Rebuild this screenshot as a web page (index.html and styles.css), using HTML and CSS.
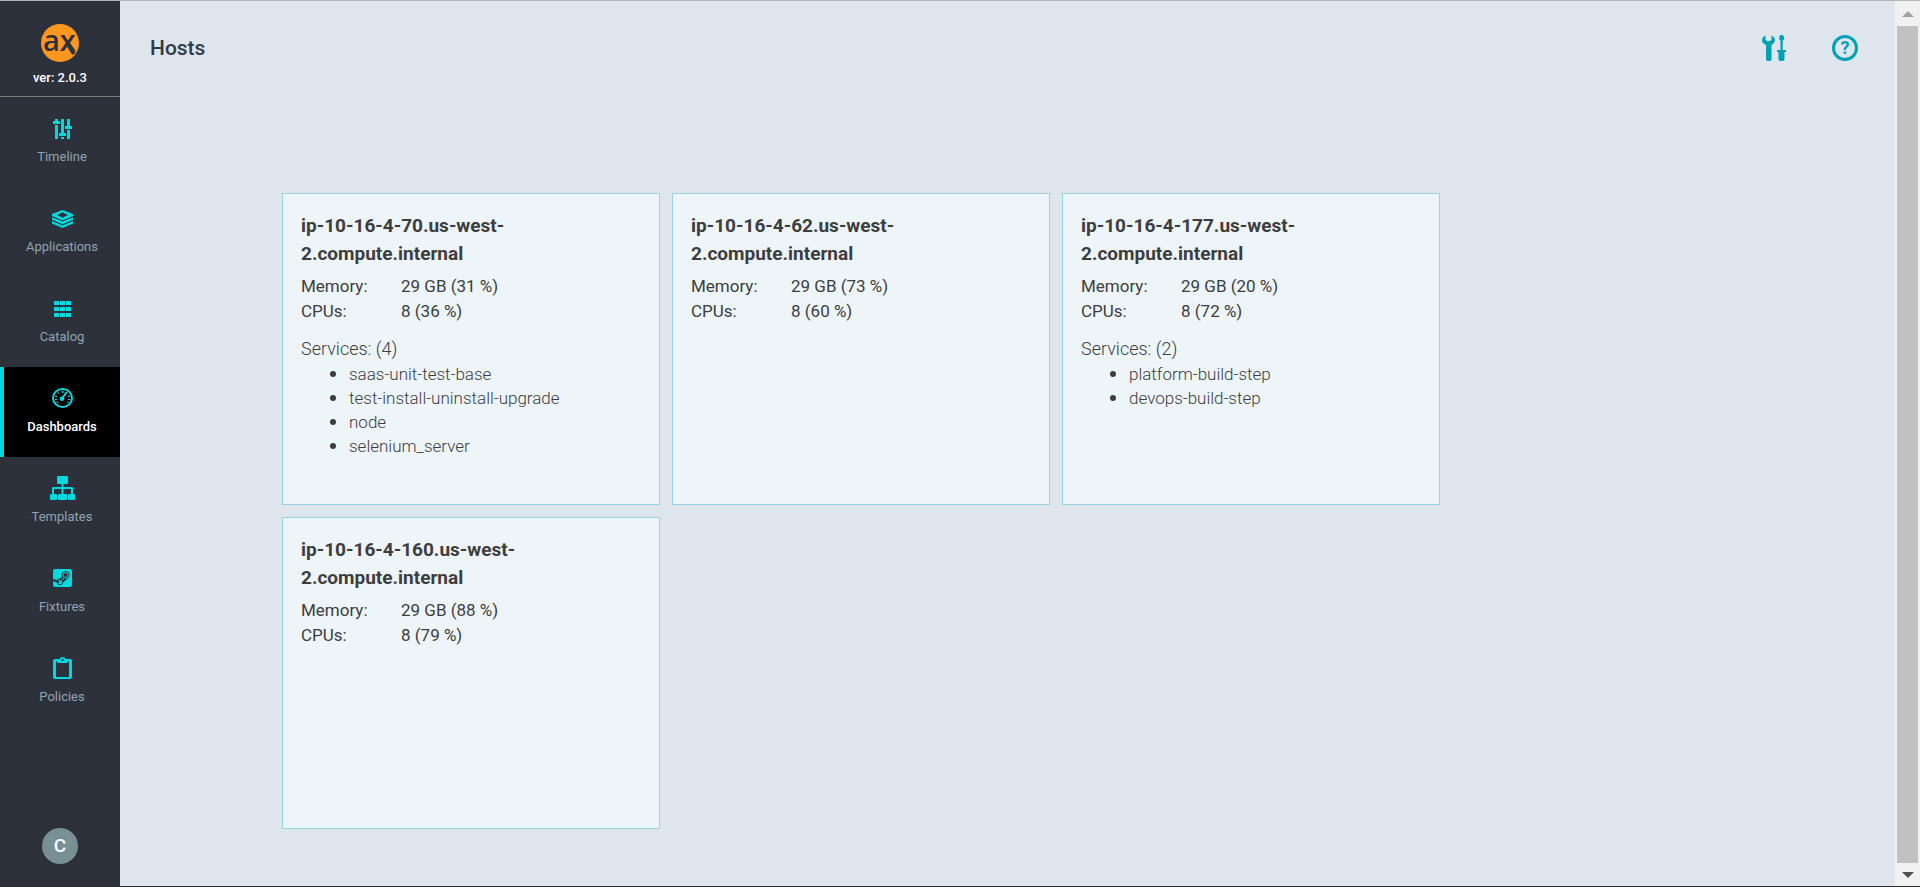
FILE: index.html
```html
<!DOCTYPE html>
<html lang="en">
<head>
<meta charset="utf-8">
<title>Hosts</title>
<link rel="stylesheet" href="styles.css">
</head>
<body>
<div class="app">
  <aside class="sidebar">
    <div class="brand">
      <svg class="logo" width="38" height="38" viewBox="0 0 38 38" role="img" aria-label="ax">
        <circle cx="19" cy="19" r="19" fill="#fd971f"/>
        <text class="logo-text" x="2" y="27">ax</text>
        <path d="M26 19L33 30" stroke="#2d313b" stroke-width="4"/>
      </svg>
      <span class="version">ver: 2.0.3</span>
    </div>
    <nav class="nav">
      <a class="nav-item" href="#timeline">
        <span class="nav-icon"><svg width="19" height="20" viewBox="0 0 19 20" fill="currentColor"><path d="M2 0h3v2h2v3H0V2h2zM2 6h3v14H2zM8 0h3v14h2v3H6v-3h2zM8 18h3v2H8zM14 0h3v7h2v3h-7V7h2zM14 11h3v9h-3z"/></svg></span>
        <span>Timeline</span>
      </a>
      <a class="nav-item" href="#applications">
        <span class="nav-icon"><svg width="21" height="18" viewBox="0 0 21 18" fill="currentColor"><path fill-rule="evenodd" d="M10.500 0L21 4V6L10.500 10.500L0 6V4zM10.500 2.200L5 5L10.500 7.800L16 5z"/><path d="M0 7.200L10.500 11.600L21 7.200V9.800L10.500 14.300L0 9.800zM0 11L10.500 15.400L21 11V13.500L10.500 18L0 13.500z"/></svg></span>
        <span>Applications</span>
      </a>
      <a class="nav-item" href="#catalog">
        <span class="nav-icon"><svg width="17" height="16" viewBox="0 0 17 16" fill="currentColor"><path d="M0 0h5v4H0zM6 0h5v4H6zM12 0h5v4h-5zM0 6h5v4H0zM6 6h5v4H6zM12 6h5v4h-5zM0 12h5v4H0zM6 12h5v4H6zM12 12h5v4h-5z"/></svg></span>
        <span>Catalog</span>
      </a>
      <a class="nav-item active" href="#dashboards" aria-current="page">
        <span class="nav-icon"><svg width="21" height="22" viewBox="0 0 21 22" fill="none" stroke="currentColor"><ellipse cx="10.500" cy="10" rx="9.500" ry="9" stroke-width="2"/><path d="M10.500 3v2M5.500 4.500l1 1.200M3 8l2 .6M3 11.500h2M4.500 14.500l1.500-.8M16.500 14.500l-1.500-.8M18 11.500h-2M18 8l-2 .6" stroke-width="1.200"/><circle cx="10" cy="10.800" r="2.300" fill="currentColor" stroke="none"/><path d="M10 10.500L14.800 4" stroke-width="2"/></svg></span>
        <span>Dashboards</span>
      </a>
      <a class="nav-item" href="#templates">
        <span class="nav-icon"><svg width="25" height="26" viewBox="0 0 25 26" fill="currentColor"><rect x="7" width="11" height="8" rx="1"/><rect y="18" width="7" height="6" rx="1"/><rect x="8" y="18" width="9" height="6" rx="1"/><rect x="18" y="18" width="7" height="6" rx="1"/><path d="M11.500 7h2v4H22q1 0 1 1v6h-2v-5h-7.500v5h-2v-5H4v5H2v-6q0-1 1-1h8.500z"/></svg></span>
        <span>Templates</span>
      </a>
      <a class="nav-item" href="#fixtures">
        <span class="nav-icon"><svg width="19" height="20" viewBox="0 0 19 20"><rect width="19" height="18" rx="2" fill="currentColor"/><g fill="none" stroke="#2d313b"><circle cx="12.500" cy="6" r="3.500" stroke-width="1"/><circle cx="12.500" cy="6" r="1.200" fill="#2d313b" stroke-width="1.500"/><path d="M0 11L6 13M9.500 8L7 11.500M13 9.500L9.500 12.500" stroke-width="2"/><circle cx="7" cy="12.800" r="2.900" stroke-width="1"/></g></svg></span>
        <span>Fixtures</span>
      </a>
      <a class="nav-item" href="#policies">
        <span class="nav-icon"><svg width="19" height="24" viewBox="0 0 19 24" fill="currentColor"><path fill-rule="evenodd" d="M2 2h4.500Q7 0 9.500 0T12.500 2H17q2 0 2 2v16q0 2-2 2H2q-2 0-2-2V4q0-2 2-2zM3 4.500V20h13V4.500h-1.500V6h-10V4.500zM9.500 2a1 1 0 1 0 .01 0z"/></svg></span>
        <span>Policies</span>
      </a>
    </nav>
    <button class="avatar" type="button">C</button>
  </aside>

  <main class="main">
    <header class="topbar">
      <h1 class="page-title">Hosts</h1>
      <div class="actions">
        <button class="icon-button" type="button" aria-label="Settings">
          <svg width="24" height="26" viewBox="0 0 24 26" fill="currentColor"><path d="M3.500 0.500V4.500L5 6H8L9.500 4.500V0.500Q13 2 13 5.500Q12.500 8.500 9.500 10V24Q9.500 26 6.700 26T4 24V10Q.5 8.500 0 5.500Q0 2 3.500 .5z"/><path d="M18.500 0h2.200l1.300 2v2.500l-1.300 1V15H24v2h-1.500v7q0 2-3 2t-3-2v-7H15v-2h3.500V5.500l-1.300-1V2z"/></svg>
        </button>
        <button class="icon-button help" type="button" aria-label="Help">?</button>
      </div>
    </header>
    <section class="hosts">
      <article class="card">
        <h2 class="card-title">ip-10-16-4-70.us-west-2.compute.internal</h2>
        <dl class="stats"><dt>Memory:</dt><dd>29 GB (31 %)</dd><dt>CPUs:</dt><dd>8 (36 %)</dd></dl>
        <p class="services-title">Services: (4)</p>
        <ul class="services"><li>saas-unit-test-base</li><li>test-install-uninstall-upgrade</li><li>node</li><li>selenium_server</li></ul>
      </article>
      <article class="card">
        <h2 class="card-title">ip-10-16-4-62.us-west-2.compute.internal</h2>
        <dl class="stats"><dt>Memory:</dt><dd>29 GB (73 %)</dd><dt>CPUs:</dt><dd>8 (60 %)</dd></dl>
      </article>
      <article class="card">
        <h2 class="card-title">ip-10-16-4-177.us-west-2.compute.internal</h2>
        <dl class="stats"><dt>Memory:</dt><dd>29 GB (20 %)</dd><dt>CPUs:</dt><dd>8 (72 %)</dd></dl>
        <p class="services-title">Services: (2)</p>
        <ul class="services"><li>platform-build-step</li><li>devops-build-step</li></ul>
      </article>
      <article class="card">
        <h2 class="card-title">ip-10-16-4-160.us-west-2.compute.internal</h2>
        <dl class="stats"><dt>Memory:</dt><dd>29 GB (88 %)</dd><dt>CPUs:</dt><dd>8 (79 %)</dd></dl>
      </article>
    </section>
  </main>

  <div class="scrollbar" aria-hidden="true">
    <svg class="arrow up" width="12" height="6" viewBox="0 0 12 6"><path d="M0 6L6 0L12 6z" fill="#a3a3a3"/></svg>
    <div class="thumb"></div>
    <svg class="arrow" width="12" height="6" viewBox="0 0 12 6"><path d="M0 0L6 6L12 0z" fill="#505050"/></svg>
  </div>
</div>
</body>
</html>
```
FILE: styles.css
```css
* {
  box-sizing: border-box;
}

body {
  margin: 0;
  font-family: Roboto, "Liberation Sans", sans-serif;
  color: #3d3d3d;
  background: #dee5ec;
}

h1, h2, p, dl, dd, ul {
  margin: 0;
}

button {
  padding: 0;
  border: 0;
  background: none;
  font-family: inherit;
  cursor: pointer;
}

.app {
  display: flex;
  min-height: 100vh;
  border-top: 1px solid #b3b3b8;
  border-bottom: 1px solid #2b2b2e;
}

.sidebar {
  display: flex;
  flex-direction: column;
  flex: none;
  width: 120px;
  background: #2d313b;
}

.brand {
  display: flex;
  flex-direction: column;
  align-items: center;
  gap: 8px;
  padding: 23px 0 10px;
  border-bottom: 1px solid #7a7b7b;
}

.logo {
  overflow: visible;
}

.logo-text {
  font-family: "Open Sans", sans-serif;
  font-size: 29px;
  font-weight: 600;
  fill: #2d313b;
}

.version {
  font-size: 13px;
  font-weight: 500;
  line-height: 16px;
  color: #fff;
}

.nav-item {
  display: flex;
  flex-direction: column;
  align-items: center;
  gap: 8px;
  height: 90px;
  padding-top: 20px;
  border-left: 4px solid transparent;
  font-size: 13px;
  line-height: 16px;
  color: #8fa4b1;
  text-decoration: none;
}

.nav-icon {
  display: flex;
  align-items: center;
  height: 24px;
  color: #00dadf;
}

.nav-item.active {
  border-left-color: #00dadf;
  background: #000;
  color: #fff;
  font-weight: 500;
}

.avatar {
  width: 36px;
  height: 36px;
  margin: auto auto 22px;
  border-radius: 50%;
  background: #789095;
  color: #fff;
  font-size: 19px;
  font-weight: 500;
  line-height: 34px;
}

.main {
  flex: 1;
  min-width: 0;
}

.topbar {
  display: flex;
  align-items: center;
  justify-content: space-between;
  height: 94px;
  padding: 0 37px 0 30px;
}

.page-title {
  font-size: 21px;
  font-weight: 500;
  color: #2f3b47;
}

.actions {
  display: flex;
  gap: 46px;
}

.icon-button {
  display: flex;
  align-items: center;
  justify-content: center;
  color: #00a2b3;
}

.help {
  width: 26px;
  height: 26px;
  border: 3px solid #00a2b3;
  border-radius: 50%;
  font-size: 18px;
  font-weight: 700;
  line-height: 20px;
}

.hosts {
  display: flex;
  flex-wrap: wrap;
  gap: 12px;
  max-width: 1451px;
  margin: 98px auto 56px;
}

.card {
  width: 378px;
  min-height: 312px;
  padding: 18px;
  border: 1px solid #97d4e1;
  background: #edf5f9;
}

.card-title {
  font-size: 19px;
  font-weight: 700;
  line-height: 28px;
}

.stats {
  display: grid;
  grid-template-columns: 100px 1fr;
  margin-top: 6px;
  font-size: 17px;
  line-height: 25px;
}

.services-title {
  margin-top: 12px;
  font-size: 18px;
  font-weight: 300;
  line-height: 26px;
}

.services {
  padding-left: 48px;
  font-size: 17px;
  font-weight: 300;
  line-height: 22px;
}

.services li {
  height: 24px;
}

.services li::marker {
  font-size: 20px;
}

.scrollbar {
  display: flex;
  flex-direction: column;
  align-items: center;
  gap: 9px;
  flex: none;
  width: 25px;
  padding: 10px 2px 8px;
  background: #f1f1f1;
}

.thumb {
  flex: 1;
  align-self: stretch;
  background: #c1c1c1;
}
```
